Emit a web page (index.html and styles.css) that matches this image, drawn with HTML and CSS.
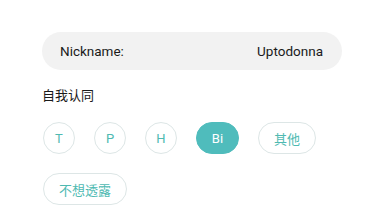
FILE: index.html
```html
<!DOCTYPE html>
<html lang="zh">
<head>
    <meta charset="UTF-8">
    <title>Profile</title>
    <link rel="stylesheet" href="styles.css">
</head>
<body>
    <div class="page">
        <div class="nick-bar">
            <span class="nick-label">Nickname:</span>
            <span class="nick-value">Uptodonna</span>
        </div>
        <div class="section-title">自我认同</div>
        <div class="chips">
            <div class="chip round">T</div>
            <div class="chip round">P</div>
            <div class="chip round">H</div>
            <div class="chip active">Bi</div>
            <div class="chip">其他</div>
            <div class="chip">不想透露</div>
        </div>
    </div>
</body>
</html>
```

FILE: styles.css
```css
* {
    margin: 0;
    padding: 0;
    box-sizing: border-box;
}

body {
    font-family: Roboto, "Noto Sans CJK SC", sans-serif;
    background-color: #ffffff;
    color: #1a1a1a;
}

.page {
    padding: 32px 42px 0 43px;
}

.nick-bar {
    width: 300px;
    height: 38px;
    margin-left: -1px;
    border-radius: 19px;
    background-color: #f2f2f2;
    display: flex;
    align-items: center;
    justify-content: space-between;
    padding: 0 19px 0 18px;
    font-size: 13.5px;
}

.section-title {
    margin-top: 17px;
    margin-left: -1px;
    font-size: 13px;
    line-height: 18px;
}

.chips {
    margin-top: 17px;
    display: flex;
    flex-wrap: wrap;
    gap: 19px;
    width: 300px;
}

.chip {
    height: 32px;
    padding: 0 15px;
    border: 1px solid #dde6e6;
    border-radius: 16px;
    display: flex;
    align-items: center;
    justify-content: center;
    font-size: 13px;
    color: #4fbab2;
}

.chip.round {
    width: 32px;
    padding: 0;
}

.chip.active {
    width: 43px;
    padding: 0;
    background-color: #4fbcbc;
    border-color: #4fbcbc;
    color: #ffffff;
}
```
